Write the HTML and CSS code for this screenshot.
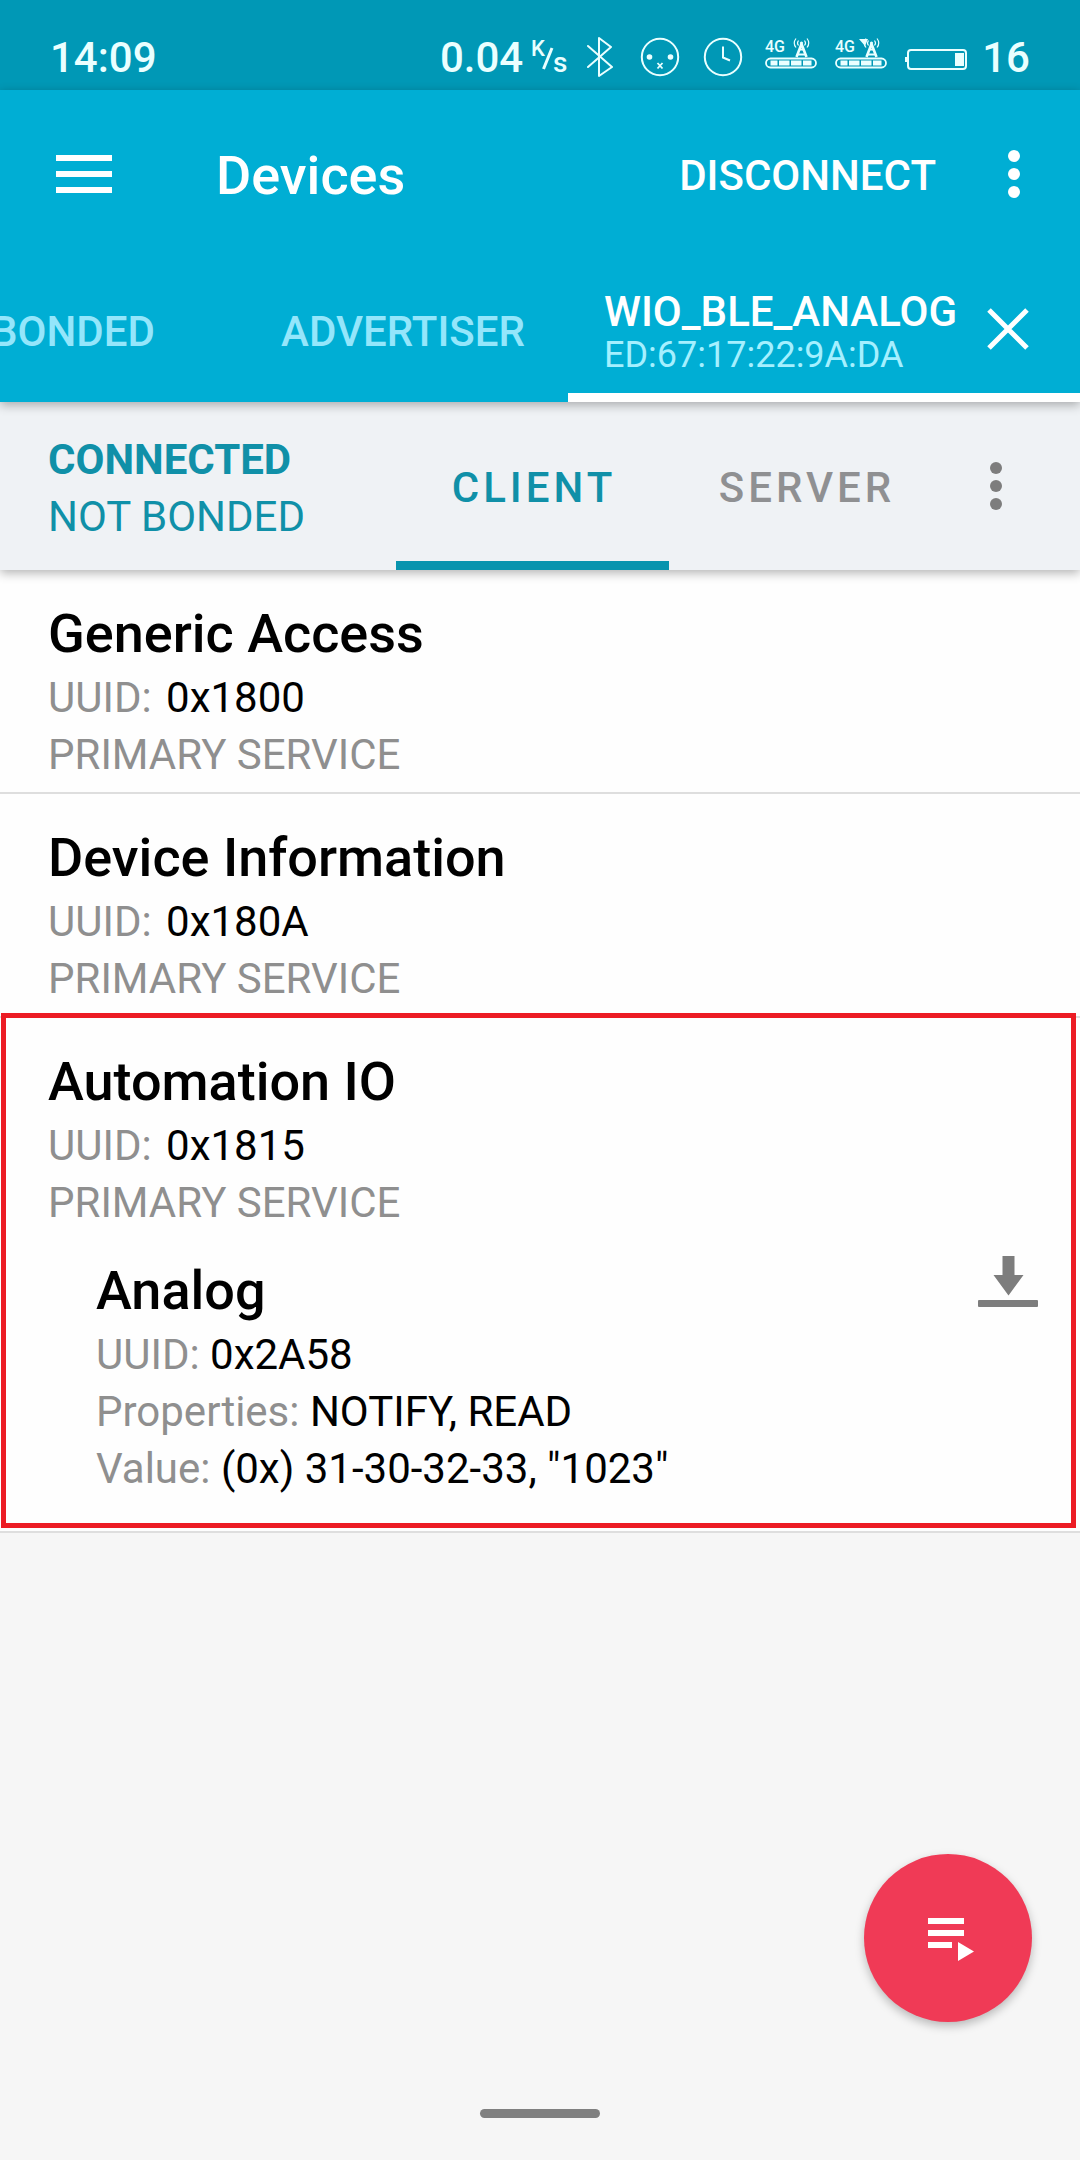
FILE: index.html
```html
<!DOCTYPE html>
<html lang="en">
<head>
<meta charset="utf-8">
<meta name="viewport" content="width=device-width, initial-scale=1">
<title>Devices</title>
<link rel="stylesheet" href="styles.css">
</head>
<body>
<div class="status-bar">
  <span class="status-time">14:09</span>
  <div class="status-icons">
    <span class="speed">0.04
      <svg width="38" height="50" viewBox="0 0 38 50" aria-label="K/s"><text class="unit-upper" x="0" y="24">K</text><path d="M12.500 37L21 16" stroke="currentColor" stroke-width="3"/><text class="unit-lower" x="22" y="40">s</text></svg>
    </span>
    <svg width="34" height="42" viewBox="0 0 34 42" fill="none" stroke="currentColor" stroke-width="2" stroke-linejoin="round" stroke-linecap="round" aria-hidden="true"><path d="M1 10L25 31L12 40V2L24 11L1 31"/></svg>
    <svg width="42" height="42" viewBox="0 0 42 42" fill="none" stroke="currentColor" aria-hidden="true"><circle cx="21" cy="21" r="18.200" stroke-width="2"/><circle cx="10.500" cy="21" r="2.800" fill="currentColor" stroke="none"/><circle cx="31.500" cy="21" r="2.800" fill="currentColor" stroke="none"/><path d="M18.500 27l5 5.500M23.500 27l-5 5.500" stroke-width="1.800"/></svg>
    <svg width="48" height="42" viewBox="0 0 48 42" fill="none" stroke="currentColor" stroke-width="2" aria-hidden="true"><circle cx="24" cy="21" r="18.200"/><path d="M24 10.500V21.500L31 24.500"/></svg>
    <svg class="signal" width="52" height="42" viewBox="0 0 52 42" fill="none" stroke="currentColor" aria-hidden="true"><text class="net" x="0" y="16">4G</text><use href="#tower"/></svg>
    <svg class="signal" width="52" height="42" viewBox="0 0 52 42" fill="none" stroke="currentColor" aria-hidden="true"><text class="net" x="0" y="16">4G</text><path d="M24 3h9l-3 7z" fill="currentColor" stroke="none"/><use href="#tower"/></svg>
    <svg width="62" height="42" viewBox="0 0 62 42" fill="none" stroke="currentColor" stroke-width="2" aria-hidden="true"><rect x="3" y="14" width="58" height="19" rx="3"/><path d="M1 21v5"/><path d="M50 17h9v13h-9z" fill="currentColor" stroke="none"/></svg>
    <span class="level">16</span>
  </div>
</div>

<svg class="defs" width="0" height="0" aria-hidden="true">
  <defs>
    <g id="tower">
      <path d="M36.500 8L31.500 21M36.500 8L41.500 21" stroke-width="2.600"/>
      <path d="M34 13.500h5M32.500 18.500h8" stroke-width="1.800"/>
      <circle cx="36.500" cy="7" r="1.600" fill="currentColor" stroke="none"/>
      <path d="M33.500 4.500q-2 2.500 0 5M39.500 4.500q2 2.500 0 5M31 2.500q-3.500 4.500 0 9M42 2.500q3.500 4.500 0 9" stroke-width="1.200"/>
      <rect x="1" y="22.500" width="50" height="9" rx="4.500" stroke-width="1.800"/>
      <path d="M5.500 27h7M14 27h10.500M26 27h10.500M38 27h8.500" stroke-width="5"/>
    </g>
  </defs>
</svg>

<header class="app-header">
  <div class="toolbar">
    <button class="icon-button menu-button" aria-label="Open menu"><svg width="56" height="38" viewBox="0 0 56 38" fill="currentColor"><path d="M0 0h56v6H0zM0 16h56v6H0zM0 32h56v6H0z"/></svg></button>
    <h1 class="title">Devices</h1>
    <button class="disconnect">DISCONNECT</button>
    <button class="icon-button overflow" aria-label="More options"><svg width="12" height="48" viewBox="0 0 12 48" fill="currentColor"><circle cx="6" cy="6" r="6"/><circle cx="6" cy="24" r="6"/><circle cx="6" cy="42" r="6"/></svg></button>
  </div>
  <nav class="tabs" aria-label="Views">
    <button class="tab">BONDED</button>
    <button class="tab">ADVERTISER</button>
    <div class="device-tab">
      <button class="device-name" aria-current="page"><span>WIO_BLE_ANALOG</span><span class="address">ED:67:17:22:9A:DA</span></button>
      <button class="icon-button" aria-label="Close tab"><svg width="42" height="42" viewBox="0 0 42 42" fill="none" stroke="currentColor" stroke-width="5"><path d="M2 2L40 40M40 2L2 40"/></svg></button>
    </div>
  </nav>
</header>

<section class="connection">
  <div class="state"><strong>CONNECTED</strong><span>NOT BONDED</span></div>
  <button class="role role-active">CLIENT</button>
  <button class="role">SERVER</button>
  <button class="icon-button role-menu" aria-label="Connection options"><svg width="12" height="48" viewBox="0 0 12 48" fill="currentColor"><circle cx="6" cy="6" r="6"/><circle cx="6" cy="24" r="6"/><circle cx="6" cy="42" r="6"/></svg></button>
</section>

<main class="services">
  <article class="service">
    <h2>Generic Access</h2>
    <p class="uuid">UUID: <b>0x1800</b></p>
    <p>PRIMARY SERVICE</p>
  </article>
  <article class="service">
    <h2>Device Information</h2>
    <p class="uuid">UUID: <b>0x180A</b></p>
    <p>PRIMARY SERVICE</p>
  </article>
  <article class="service service-selected">
    <h2>Automation IO</h2>
    <p class="uuid">UUID: <b>0x1815</b></p>
    <p>PRIMARY SERVICE</p>
    <div class="characteristic">
      <div>
        <h2>Analog</h2>
        <p>UUID: <b>0x2A58</b></p>
        <p>Properties: <b>NOTIFY, READ</b></p>
        <p>Value: <b>(0x) 31-30-32-33, "1023"</b></p>
      </div>
      <button class="icon-button" aria-label="Read value"><svg width="60" height="52" viewBox="0 0 60 52" fill="currentColor"><path d="M24.500 0h12v19h9L30.500 39.500L15.500 19h9z"/><rect y="44" width="60" height="7" rx="1"/></svg></button>
    </div>
  </article>
</main>

<button class="fab" aria-label="Run macro"><svg width="46" height="44" viewBox="0 0 46 44" fill="currentColor"><path d="M0 0h36v6H0zM0 12h36v6H0zM0 24h24v6H0zM30 24l16 9.500L30 43z"/></svg></button>
<div class="home-area"><div class="home-pill"></div></div>
</body>
</html>
```
FILE: styles.css
```css
* {
  box-sizing: border-box;
}

body {
  margin: 0;
  min-height: 100vh;
  display: flex;
  flex-direction: column;
  background: #f6f6f6;
  color: #000;
  font-family: Roboto, "Liberation Sans", sans-serif;
  font-size: 42px;
  overflow-x: hidden;
}

button {
  border: 0;
  padding: 0;
  background: none;
  color: inherit;
  font: inherit;
  cursor: pointer;
}

svg {
  display: block;
}

h1,
h2,
p {
  margin: 0;
}

.defs {
  position: absolute;
}

.icon-button {
  flex: none;
  display: flex;
}

/* System status bar */
.status-bar {
  display: flex;
  justify-content: space-between;
  align-items: center;
  height: 90px;
  padding: 24px 50px 0;
  background: #0098b6;
  color: #eaffff;
  font-weight: 500;
}

.status-icons {
  display: flex;
  align-items: center;
  gap: 18px;
}

.level {
  margin-left: -3px;
}

.speed {
  display: flex;
  align-items: center;
  gap: 8px;
}

.speed text,
.signal text {
  fill: currentColor;
  stroke: none;
}

.unit-upper {
  font-size: 22px;
}

.unit-lower {
  font-size: 28px;
}

.net {
  font-size: 16px;
}

/* App bar and tabs */
.app-header {
  position: relative;
  z-index: 2;
  background: #00aed4;
  color: #fff;
  font-weight: 500;
  box-shadow: 0 3px 10px rgba(0, 0, 0, 0.3);
}

.toolbar {
  display: flex;
  align-items: center;
  height: 168px;
  padding: 0 60px 0 56px;
}

.menu-button {
  margin-right: 104px;
}

.title {
  flex: 1;
  padding-top: 3px;
  font-size: 54px;
  font-weight: 500;
}

.disconnect {
  margin-right: 72px;
  padding-top: 3px;
}

.tabs {
  display: flex;
  justify-content: flex-end;
  height: 144px;
  overflow: hidden;
}

.tab {
  flex: none;
  width: 330px;
  padding-top: 2px;
  color: #94e6fb;
}

.device-tab {
  flex: none;
  display: flex;
  justify-content: space-between;
  align-items: center;
  width: 512px;
  padding: 15px 51px 9px 36px;
  border-bottom: 9px solid #fff;
}

.device-name {
  display: flex;
  flex-direction: column;
  padding-top: 6px;
  line-height: 46px;
  text-align: left;
}

.address {
  color: #a4f0ff;
  font-size: 36px;
  font-weight: 400;
  line-height: 40px;
}

/* Connection state */
.connection {
  position: relative;
  z-index: 1;
  display: flex;
  align-items: stretch;
  height: 168px;
  padding-left: 48px;
  background: #eff2f5;
  color: #1090a8;
  box-shadow: 0 3px 10px rgba(0, 0, 0, 0.3);
}

.state {
  flex: 1;
  display: flex;
  flex-direction: column;
  justify-content: center;
  padding-top: 4px;
  line-height: 57px;
}

.role {
  width: 273px;
  padding: 12px 0 0 3px;
  border-bottom: 9px solid transparent;
  color: #8f9092;
  font-weight: 500;
  letter-spacing: 4px;
}

.role-active {
  border-color: #0894ae;
  color: #1090a8;
}

.role-menu {
  align-items: center;
  justify-content: center;
  width: 108px;
  margin-right: 30px;
  color: #7d7d7d;
}

/* Service list */
.service {
  position: relative;
  padding: 29px 48px 9px;
  border-bottom: 2px solid #dedede;
  background: #fefefe;
  color: #8f8f8f;
  line-height: 57px;
}

.service h2 {
  color: #000;
  font-size: 54px;
  font-weight: 500;
  line-height: 70px;
}

.service b {
  color: #000;
  font-weight: 400;
}

.uuid b {
  margin-left: 4px;
}

.service-selected {
  padding-bottom: 34px;
}

/* Outline drawn over the neighbouring divider */
.service-selected::after {
  content: "";
  position: absolute;
  inset: -5px 4px 3px 1px;
  border: 5px solid #ec1c24;
  pointer-events: none;
}

.characteristic {
  display: flex;
  justify-content: space-between;
  align-items: flex-start;
  margin-top: 25px;
  padding-left: 48px;
}

.characteristic .icon-button {
  margin-right: -6px;
  color: #7d7d7d;
}

.fab {
  position: fixed;
  right: 48px;
  bottom: 138px;
  display: flex;
  align-items: center;
  justify-content: center;
  width: 168px;
  height: 168px;
  padding: 4px 0 0 6px;
  border-radius: 50%;
  background: #f03a56;
  color: #fff;
  box-shadow: 0 4px 10px rgba(0, 0, 0, 0.25);
}

.home-area {
  margin-top: auto;
  padding: 42px;
}

.home-pill {
  width: 120px;
  height: 9px;
  margin: 0 auto;
  border-radius: 5px;
  background: #808080;
}
```
